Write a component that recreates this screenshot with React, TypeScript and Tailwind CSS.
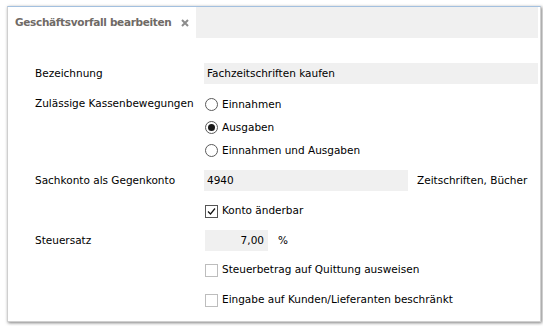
import React from 'react';

const font = { fontFamily: '"DejaVu Sans", Verdana, sans-serif' };

function Radio({ checked, label }: { checked?: boolean; label: string }) {
  return (
    <div className="flex h-[23px] items-center">
      <span className="flex h-[13px] w-[13px] items-center justify-center rounded-full border border-[#5a5a5a] bg-white">
        {checked && <span className="h-[7px] w-[7px] rounded-full bg-[#1a1a1a]" />}
      </span>
      <span className="ml-[4px]">{label}</span>
    </div>
  );
}

function Check({ checked, label }: { checked?: boolean; label: string }) {
  return (
    <div className="flex h-[22px] items-center">
      <span
        className={
          checked
            ? 'flex h-[13px] w-[13px] items-center justify-center border border-[#555] bg-white'
            : 'flex h-[13px] w-[13px] items-center justify-center border border-[#bdbdbd] bg-white'
        }
      >
        {checked && (
          <svg width="9" height="9" viewBox="0 0 9 9">
            <path d="M1 4.5 L3.5 7 L8 1.5" fill="none" stroke="#111" strokeWidth="1.2" />
          </svg>
        )}
      </span>
      <span className="ml-[4px]">{label}</span>
    </div>
  );
}

export default function App() {
  return (
    <div className="h-[326px] w-[543px] bg-white pl-[7px] pt-[6px] text-[10.5px] text-black" style={font}>
      <div className="flex h-[316px] w-[534px] flex-col border border-[#cfcfcf] border-t-[#a3c0df] bg-white shadow-[1px_1px_3px_rgba(0,0,0,0.5)]">
        <div className="flex h-[31px] shrink-0 pr-[2px]">
          <div className="flex w-[188px] items-center bg-white pl-[7px]">
            <span className="whitespace-nowrap text-[10.5px] font-bold tracking-[-0.32px] text-[#6f6a66]">
              Geschäftsvorfall bearbeiten
            </span>
            <svg className="ml-[10px] shrink-0" width="8" height="8" viewBox="0 0 8 8">
              <path d="M1 1 L7 7 M7 1 L1 7" stroke="#8c8c8c" strokeWidth="2" />
            </svg>
          </div>
          <div className="flex-1 bg-[#f0f0f0]" />
        </div>

        <div className="flex flex-col pl-[27px] pr-[2px]">
          <div className="mt-[25px] flex h-[21px] items-center">
            <span className="w-[169px]">Bezeichnung</span>
            <div className="flex h-[21px] flex-1 items-center bg-[#f0f0f0] pl-[3px]">Fachzeitschriften kaufen</div>
          </div>

          <div className="mt-[9px] flex">
            <span className="w-[169px] pt-[1px] leading-[18px]">Zulässige Kassenbewegungen</span>
            <div className="flex flex-col pl-[1px]">
              <Radio label="Einnahmen" />
              <Radio checked label="Ausgaben" />
              <Radio label="Einnahmen und Ausgaben" />
            </div>
          </div>

          <div className="mt-[8px] flex h-[21px] items-center">
            <span className="w-[169px]">Sachkonto als Gegenkonto</span>
            <div className="flex h-[21px] w-[204px] items-center bg-[#f0f0f0] pl-[3px]">4940</div>
            <span className="ml-[9px]">Zeitschriften, Bücher</span>
          </div>

          <div className="mt-[9px] pl-[170px]">
            <Check checked label="Konto änderbar" />
          </div>

          <div className="mt-[8px] flex h-[21px] items-center">
            <span className="w-[170px]">Steuersatz</span>
            <div className="flex h-[21px] w-[63px] items-center justify-end bg-[#f0f0f0] pr-[4px]">7,00</div>
            <span className="ml-[10px]">%</span>
          </div>

          <div className="mt-[8px] pl-[170px]">
            <Check label="Steuerbetrag auf Quittung ausweisen" />
          </div>
          <div className="mt-[8px] pl-[170px]">
            <Check label="Eingabe auf Kunden/Lieferanten beschränkt" />
          </div>
        </div>
      </div>
    </div>
  );
}
